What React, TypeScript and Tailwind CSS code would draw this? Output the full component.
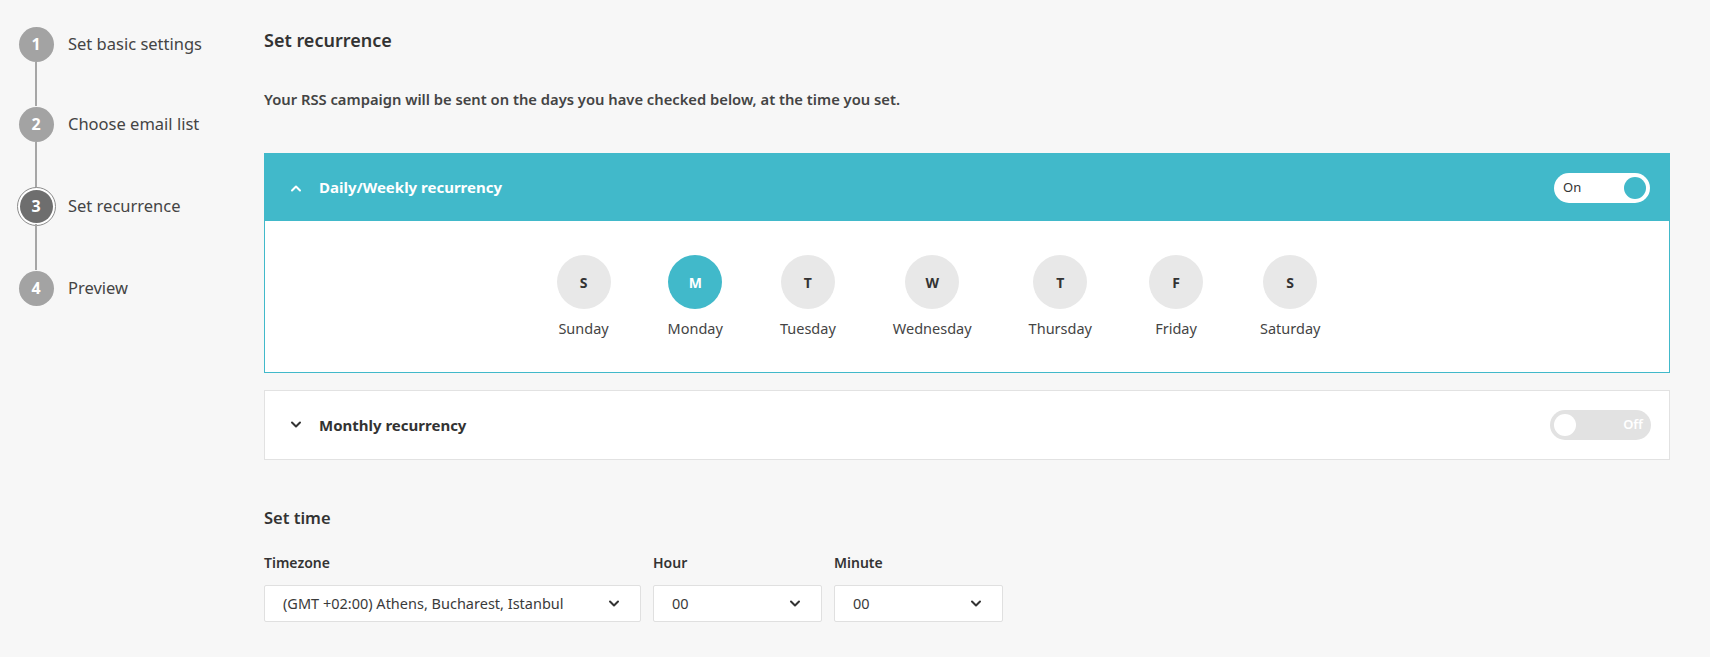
import React from "react";

const font = { fontFamily: '"Noto Sans", "Open Sans", sans-serif' };

function Chevron({ up, className }: { up?: boolean; className?: string }) {
  return (
    <svg viewBox="0 0 12 8" className={className} fill="none" stroke="currentColor" strokeWidth="2" strokeLinecap="round" strokeLinejoin="round">
      {up ? <path d="M2 6.5 6 2.5 10 6.5" /> : <path d="M2 1.5 6 5.5 10 1.5" />}
    </svg>
  );
}

const steps = [
  { n: 1, label: "Set basic settings" },
  { n: 2, label: "Choose email list" },
  { n: 3, label: "Set recurrence", active: true },
  { n: 4, label: "Preview" },
];

const lineHeights = ["h-[44px]", "h-[46px]", "h-[46px]"];

const days = [
  { l: "S", name: "Sunday" },
  { l: "M", name: "Monday", on: true },
  { l: "T", name: "Tuesday" },
  { l: "W", name: "Wednesday" },
  { l: "T", name: "Thursday" },
  { l: "F", name: "Friday" },
  { l: "S", name: "Saturday" },
];

function Select({ value, w }: { value: string; w: string }) {
  return (
    <div className={`${w} h-[37px] bg-white border border-[#e0e0e0] rounded-[2px] flex items-center justify-between pl-[18px] pr-[20px] text-[14.5px] text-[#3a3a3a]`}>
      <span>{value}</span>
      <Chevron className="w-[12px] h-[8px] text-[#333]" />
    </div>
  );
}

export default function App() {
  return (
    <div className="w-[1710px] h-[657px] bg-[#f7f7f7] flex text-[#333]" style={font}>
      {/* Sidebar */}
      <div className="w-[264px] shrink-0 pl-[18px] pt-[26px]">
        {steps.map((s, i) => (
          <div key={s.n} className="flex flex-col">
            <div className="flex items-center h-[36px]">
              <div className="w-[36px] flex justify-center">
                {s.active ? (
                  <div className="w-[39px] h-[39px] rounded-full border-[1.5px] border-[#8c8c8c] bg-white p-[2px] shrink-0">
                    <div className="w-full h-full rounded-full bg-[#6e6e6e] text-white font-bold text-[16px] flex items-center justify-center">{s.n}</div>
                  </div>
                ) : (
                  <div className="w-[35px] h-[35px] rounded-full bg-[#a3a3a3] text-white font-bold text-[16px] flex items-center justify-center shrink-0">{s.n}</div>
                )}
              </div>
              <span className="ml-[14px] text-[16.5px] text-[#444]">{s.label}</span>
            </div>
            {i < steps.length - 1 && (
              <div className="w-[36px] flex justify-center">
                <div className={`w-[2px] bg-[#a6a6a6] ${lineHeights[i]}`} />
              </div>
            )}
          </div>
        ))}
      </div>

      {/* Main */}
      <div className="flex-1 pr-[40px]">
        <h1 className="mt-[27px] text-[18px] font-semibold text-[#333] leading-[26px]">Set recurrence</h1>
        <p className="mt-[36px] text-[14.75px] font-semibold text-[#444] leading-[20px]">
          Your RSS campaign will be sent on the days you have checked below, at the time you set.
        </p>

        {/* Daily panel */}
        <div className="mt-[44px] border border-[#41b9ca] bg-white">
          <div className="h-[67px] bg-[#41b9ca] flex items-center pl-[25px] pr-[19px] text-white">
            <Chevron up className="w-[12px] h-[8px]" />
            <span className="ml-[17px] text-[15px] font-bold">Daily/Weekly recurrency</span>
            <div className="ml-auto w-[96px] h-[30px] rounded-full bg-white flex items-center justify-between pl-[9px] pr-[4px]">
              <span className="text-[13px] text-[#333]">On</span>
              <div className="w-[22px] h-[22px] rounded-full bg-[#41b9ca]" />
            </div>
          </div>
          <div className="flex justify-center pt-[34px] pb-[34px]">
            {days.map((d) => (
              <div key={d.name} className="flex flex-col items-center mr-[57px]">
                <div className={`w-[54px] h-[54px] rounded-full flex items-center justify-center text-[14px] font-bold ${d.on ? "bg-[#41b9ca] text-white" : "bg-[#e8e8e8] text-[#333]"}`}>{d.l}</div>
                <span className="mt-[9px] text-[14.5px] text-[#444] leading-[20px]">{d.name}</span>
              </div>
            ))}
          </div>
        </div>

        {/* Monthly panel */}
        <div className="mt-[17px] h-[70px] border border-[#e2e2e2] bg-white flex items-center pl-[25px] pr-[18px]">
          <Chevron className="w-[12px] h-[8px] text-[#333]" />
          <span className="ml-[17px] text-[15px] font-bold text-[#333]">Monthly recurrency</span>
          <div className="ml-auto w-[101px] h-[30px] rounded-full bg-[#e2e2e2] flex items-center justify-between pl-[4px] pr-[8px]">
            <div className="w-[22px] h-[22px] rounded-full bg-white" />
            <span className="text-[13px] font-semibold text-white">Off</span>
          </div>
        </div>

        {/* Set time */}
        <h2 className="mt-[46px] text-[16.5px] font-semibold text-[#333] leading-[24px]">Set time</h2>
        <div className="mt-[23px] flex gap-[12px]">
          <div className="flex flex-col">
            <span className="text-[14px] font-semibold text-[#333] leading-[20px]">Timezone</span>
            <div className="mt-[12px]">
              <Select value="(GMT +02:00) Athens, Bucharest, Istanbul" w="w-[377px]" />
            </div>
          </div>
          <div className="flex flex-col">
            <span className="text-[14px] font-semibold text-[#333] leading-[20px]">Hour</span>
            <div className="mt-[12px]">
              <Select value="00" w="w-[169px]" />
            </div>
          </div>
          <div className="flex flex-col">
            <span className="text-[14px] font-semibold text-[#333] leading-[20px]">Minute</span>
            <div className="mt-[12px]">
              <Select value="00" w="w-[169px]" />
            </div>
          </div>
        </div>
      </div>
    </div>
  );
}
